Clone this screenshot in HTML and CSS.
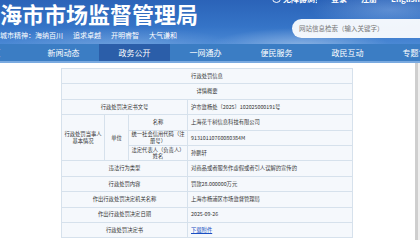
FILE: index.html
```html
<!DOCTYPE html>
<html lang="zh-CN">
<head>
  <meta charset="UTF-8" />
  <title>上海市市场监督管理局 - 行政处罚信息</title>
  <meta name="viewport" content="width=device-width, initial-scale=1.0" />
  <link rel="stylesheet" href="styles.css">
</head>
<body>
  <div class="page">
    <header class="banner">
      <div class="brand">
        <h1>上海市市场监督管理局</h1>
        <p class="motto">上海城市精神：海纳百川<span>追求卓越</span><span>开明睿智</span><span>大气谦和</span></p>
      </div>
      <div class="banner-right">
        <div class="top-links">
          <span class="ico"></span><span class="tl-wide">无障碍浏览</span>
          <span>登录</span><span>注册</span><span>English</span>
        </div>
        <div class="search">网站信息检索（输入关键字）</div>
      </div>
    </header>

    <nav class="nav">
      <a>首页</a>
      <a>新闻动态</a>
      <a class="active">政务公开</a>
      <a>一网通办</a>
      <a>便民服务</a>
      <a>政民互动</a>
      <a>专题专栏</a>
    </nav>

    <div class="body-row">
      <main class="content">
        <table class="info">
          <tr><td colspan="4" class="c">行政处罚信息</td></tr>
          <tr><td colspan="4" class="c">详情概要</td></tr>
          <tr><td colspan="3" class="c">行政处罚决定书文号</td><td>沪市监杨处〔2025〕102025000191号</td></tr>
          <tr>
            <td rowspan="3" class="c w1">行政处罚当事人<br>基本情况</td>
            <td rowspan="3" class="c w2">单位</td>
            <td class="c w3">名称</td>
            <td>上海花千树信息科技有限公司</td>
          </tr>
          <tr><td class="c w3">统一社会信用代码（注册号）</td><td>91310110760080384M</td></tr>
          <tr><td class="c w3">法定代表人（负责人）姓名</td><td>孙鹏轩</td></tr>
          <tr><td colspan="3" class="c">违法行为类型</td><td>对商品或者服务作虚假或者引人误解的宣传的</td></tr>
          <tr><td colspan="3" class="c">行政处罚内容</td><td>罚款28.000000万元</td></tr>
          <tr><td colspan="3" class="c">作出行政处罚决定机关名称</td><td>上海市杨浦区市场监督管理局</td></tr>
          <tr><td colspan="3" class="c">作出行政处罚决定日期</td><td>2025-09-26</td></tr>
          <tr><td colspan="3" class="c">行政处罚决定书</td><td><a class="link">下载附件</a></td></tr>
        </table>
      </main>
      <div class="scrollbar"></div>
    </div>
  </div>
</body>
</html>
```

FILE: styles.css
```css
* {
  box-sizing: border-box;
}

body {
  margin: 0;
  background: #fff;
  font-family: "Noto Sans CJK SC", "Noto Sans", sans-serif;
  color: #333;
}

.page {
  width: 420px;
  height: 240px;
  overflow: hidden;
}

/* banner */
.banner {
  height: 44px;
  display: flex;
  overflow: hidden;
  background:
    radial-gradient(ellipse 90px 18px at 300px 46px, rgba(255, 255, 255, 0.35), transparent),
    radial-gradient(ellipse 120px 22px at 120px 48px, rgba(255, 255, 255, 0.2), transparent),
    radial-gradient(ellipse 80px 20px at 390px 10px, rgba(180, 210, 250, 0.35), transparent),
    linear-gradient(180deg, #2b63b8 0%, #3574c7 60%, #4a88d4 100%);
}

.brand {
  flex: 1;
  margin-left: -22px;
  color: #fff;
}

.brand h1 {
  margin: 1px 0 0;
  font-size: 22px;
  line-height: 24px;
  font-weight: bold;
  white-space: nowrap;
}

.motto {
  margin: 6px 0 0 8px;
  font-size: 7px;
  line-height: 9px;
  white-space: nowrap;
}

.motto span {
  margin-left: 10px;
}

.banner-right {
  width: 160px;
  margin-right: -12px;
  display: flex;
  flex-direction: column;
}

.top-links {
  margin-top: -9px;
  height: 14px;
  display: flex;
  align-items: center;
  gap: 14px;
  font-size: 8px;
  font-weight: bold;
  color: #fff;
  white-space: nowrap;
}

.top-links .ico {
  width: 9px;
  height: 9px;
  border: 1.5px solid #fff;
  border-radius: 50%;
  margin-right: -12px;
}

.top-links .tl-wide {
  width: 34px;
  overflow: hidden;
}

.search {
  margin: 14px 0 0 20px;
  height: 19px;
  border-radius: 10px;
  background: rgba(255, 255, 255, 0.93);
  color: #777;
  font-size: 6.5px;
  line-height: 19px;
  padding-left: 7px;
  white-space: nowrap;
}

/* nav */
.nav {
  display: flex;
  margin-left: -43px;
  height: 19px;
  background: #3b7dc4;
  border-bottom: 2px solid #7aaae0;
}

.nav a {
  flex: 0 0 71px;
  text-align: center;
  color: #fff;
  font-size: 8px;
  line-height: 17px;
}

.nav a.active {
  background: #2b5ea9;
}

/* content */
.body-row {
  display: flex;
  height: 179px;
}

.content {
  flex: 1;
  padding: 5px 0 0 61px;
}

.info {
  width: 292px;
  border-collapse: collapse;
  background: #f5f8fc;
  font-size: 5.3px;
  color: #333;
}

.info td {
  border: 1px solid #d6e1ec;
  height: 15.4px;
  padding: 0 3px;
  line-height: 6.5px;
}

.info td.c {
  text-align: center;
}

.info .w1 {
  width: 43px;
  padding: 0;
}

.info .w2 {
  width: 24px;
}

.info .w3 {
  width: 59px;
  padding: 0;
}

.link {
  color: #1a4fc2;
  text-decoration: underline;
}

.scrollbar {
  width: 5px;
  border-left: 3px solid #cfcfcf;
  background: #eeeeee;
}
```
